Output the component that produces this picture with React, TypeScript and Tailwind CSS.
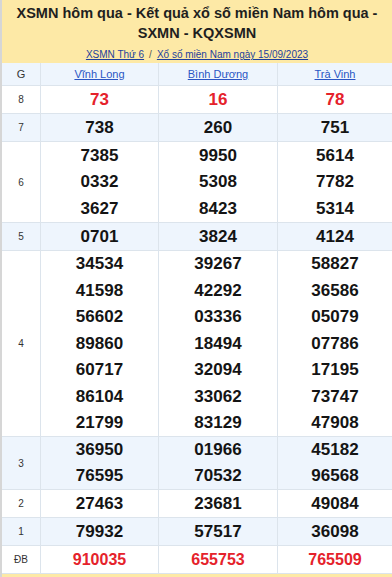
const provinces = ['Vĩnh Long', 'Bình Dương', 'Trà Vinh'];

type Prize = { label: string; h: string; red?: boolean; alt?: boolean; rows: string[][] };

// heights include the 1px bottom border (border-box)
const prizes: Prize[] = [
  { label: '8', h: 'h-[28px]', red: true, rows: [['73', '16', '78']] },
  { label: '7', h: 'h-[28px]', alt: true, rows: [['738', '260', '751']] },
  {
    label: '6',
    h: 'h-[81px]',
    rows: [
      ['7385', '9950', '5614'],
      ['0332', '5308', '7782'],
      ['3627', '8423', '5314'],
    ],
  },
  { label: '5', h: 'h-[28px]', alt: true, rows: [['0701', '3824', '4124']] },
  {
    label: '4',
    h: 'h-[186px]',
    rows: [
      ['34534', '39267', '58827'],
      ['41598', '42292', '36586'],
      ['56602', '03336', '05079'],
      ['89860', '18494', '07786'],
      ['60717', '32094', '17195'],
      ['86104', '33062', '73747'],
      ['21799', '83129', '47908'],
    ],
  },
  {
    label: '3',
    h: 'h-[53px]',
    alt: true,
    rows: [
      ['36950', '01966', '45182'],
      ['76595', '70532', '96568'],
    ],
  },
  { label: '2', h: 'h-[28px]', rows: [['27463', '23681', '49084']] },
  { label: '1', h: 'h-[28px]', alt: true, rows: [['79932', '57517', '36098']] },
  { label: 'ĐB', h: 'h-[28px]', red: true, rows: [['910035', '655753', '765509']] },
];

const cols = 'grid grid-cols-[38px_118px_119px_1fr]';

export default function App() {
  return (
    <div className="w-[392px] h-[577px] overflow-hidden border-l-2 border-[#d6d6d6] bg-[#fde9a6] font-['Liberation_Sans',Arial,sans-serif]">
      {/* Title */}
      <div className="h-[63px] pt-[3px] text-center">
        <h1 className="text-[14.5px] leading-[20px] font-bold text-[#1f1f1f]">
          XSMN hôm qua - Kết quả xổ số miền Nam hôm qua -
          <br />
          SXMN - KQXSMN
        </h1>
        <div className="mt-[6px] text-[10px] leading-[12px] text-[#555]">
          <a className="underline text-[#1e3f9c]">XSMN Thứ 6</a>
          <span className="mx-[5px]">/</span>
          <a className="underline text-[#1e3f9c]">Xổ số miền Nam ngày 15/09/2023</a>
        </div>
      </div>

      {/* Table */}
      <div className="bg-white">
        <div className={`${cols} h-[23px] bg-[#eef5fd] border-b border-[#dce4ec] text-[11px]`}>
          <div className="flex items-center justify-center text-[#333]">G</div>
          {provinces.map((p) => (
            <div key={p} className="flex items-center justify-center border-l border-[#dce4ec]">
              <a className="underline text-[#2a55c4]">{p}</a>
            </div>
          ))}
        </div>

        {prizes.map((pz) => (
          <div
            key={pz.label}
            className={`${cols} ${pz.h} border-b border-[#dce4ec] ${pz.alt ? 'bg-[#eef5fd]' : 'bg-white'}`}
          >
            <div className="flex items-center justify-center text-[10px] text-[#333]">{pz.label}</div>
            {[0, 1, 2].map((c) => (
              <div key={c} className="flex flex-col border-l border-[#dce4ec]">
                {pz.rows.map((r, i) => (
                  <div
                    key={i}
                    className={`flex flex-1 items-center justify-center font-bold ${
                      pz.red ? 'text-[#e5222b]' : 'text-[#141414]'
                    } ${pz.label === 'ĐB' ? 'text-[16px]' : 'text-[17px]'}`}
                  >
                    {r[c]}
                  </div>
                ))}
              </div>
            ))}
          </div>
        ))}
      </div>
    </div>
  );
}
